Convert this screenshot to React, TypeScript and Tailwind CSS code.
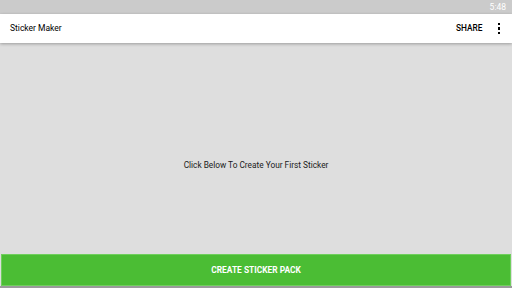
export default function App() {
  return (
    <div className="flex h-[288px] w-[512px] flex-col overflow-hidden bg-[#dedede] font-['Roboto',sans-serif]">
      {/* Status bar */}
      <div className="flex h-[14px] items-center justify-end bg-[#cbcbcb] pr-[6px] text-[8.5px] text-white">
        5:48
      </div>

      {/* App bar */}
      <div className="relative z-10 flex h-[29px] items-center justify-between bg-white pl-[10px] pr-[12px] shadow-[0_1px_3px_rgba(0,0,0,0.3)]">
        <span className="text-[8.5px] text-black">Sticker Maker</span>
        <div className="flex items-center gap-[15px]">
          <span className="text-[8.3px] font-medium text-black">SHARE</span>
          <div className="flex flex-col gap-[2px]">
            <span className="h-[2.5px] w-[2.5px] bg-black" />
            <span className="h-[2.5px] w-[2.5px] bg-black" />
            <span className="h-[2.5px] w-[2.5px] bg-black" />
          </div>
        </div>
      </div>

      {/* Content */}
      <div className="flex flex-1 items-center justify-center pt-[34px]">
        <span className="text-[8.3px] text-[#1a1a1a]">Click Below To Create Your First Sticker</span>
      </div>

      {/* Button */}
      <div className="px-[1px]">
        <button className="flex h-[32px] w-full items-center justify-center border border-[#6fcf5c] bg-[#4bbd34] text-[8.4px] font-bold text-white">
          CREATE STICKER PACK
        </button>
      </div>
      <div className="h-[2px] bg-[#9a9a9a]" />
    </div>
  );
}
